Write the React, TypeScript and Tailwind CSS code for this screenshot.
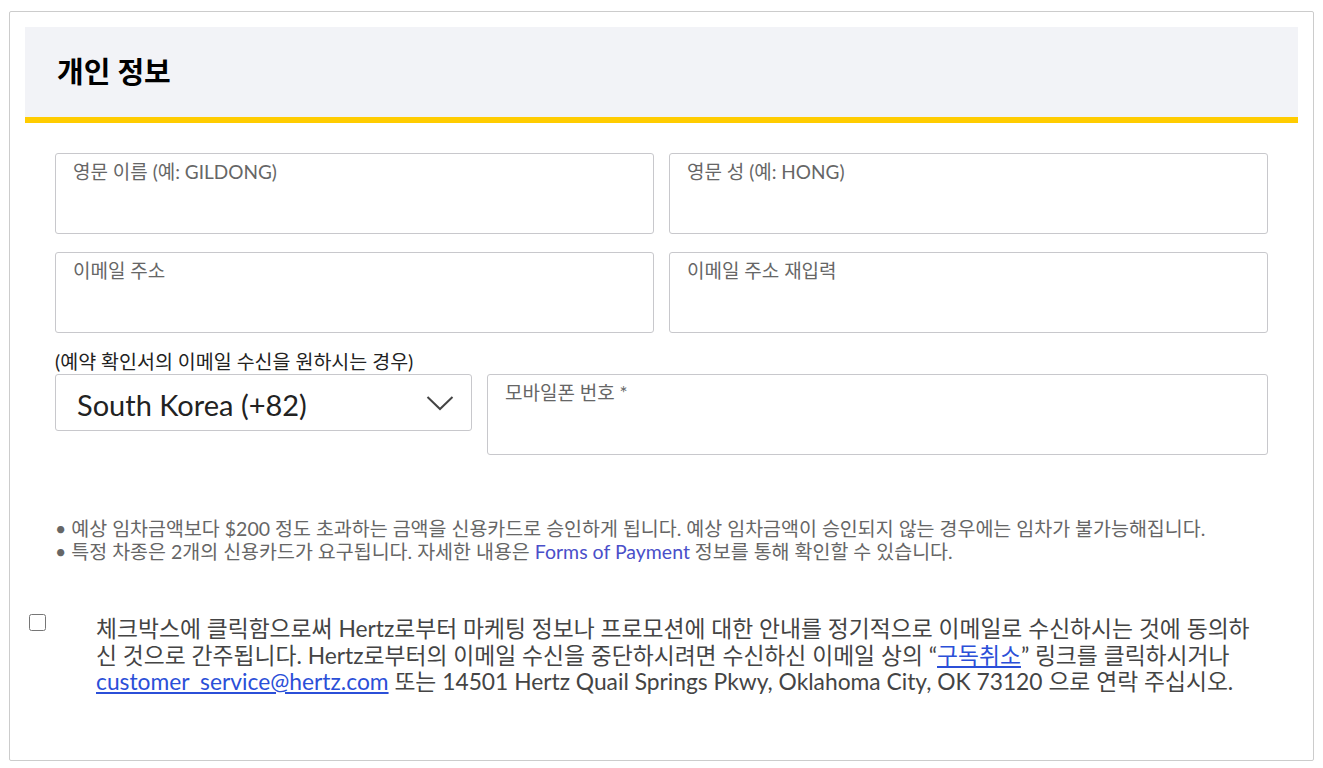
import React from 'react';

const font = { fontFamily: "Lato, 'Noto Sans CJK KR', sans-serif" };

const Field = ({ label, className = '' }: { label: string; className?: string }) => (
  <div className={`h-[81px] rounded-[3px] border border-[#c8c8cc] bg-white px-[17px] pt-[5px] text-[19px] leading-[26px] text-[#666] ${className}`}>
    {label}
  </div>
);

export default function App() {
  return (
    <div className="min-h-screen bg-white pl-[9px] pt-[11px]" style={font}>
      <div className="h-[750px] w-[1305px] rounded-[2px] border border-[#cccccc] p-[15px]">
        <div className="flex h-[96px] items-center border-b-[6px] border-[#ffcc00] bg-[#f2f3f7] px-[32px]">
          <h2 className="text-[29px] font-bold text-black">개인 정보</h2>
        </div>

        <div className="px-[30px] pt-[30px]">
          <div className="grid grid-cols-2 gap-x-[15px] gap-y-[18px]">
            <Field label="영문 이름 (예: GILDONG)" />
            <Field label="영문 성 (예: HONG)" />
            <Field label="이메일 주소" />
            <Field label="이메일 주소 재입력" />
          </div>

          <p className="mt-[17px] text-[19.5px] leading-[24px] text-[#222]">(예약 확인서의 이메일 수신을 원하시는 경우)</p>
          <div className="flex items-start gap-[15px]">
            <div className="flex h-[57px] w-[417px] items-center justify-between rounded-[3px] border border-[#c8c8cc] pl-[21px] pr-[17px]">
              <span className="pt-[5px] text-[29px] leading-[34px] text-[#222]">South Korea (+82)</span>
              <svg width="28" height="16" viewBox="0 0 28 16" fill="none" stroke="#444" strokeWidth="2">
                <path d="M1.5 2l12.5 12L26.5 2" />
              </svg>
            </div>
            <Field label="모바일폰 번호 *" className="flex-1" />
          </div>

          <ul className="mt-[62px] text-[19.5px] leading-[23px] text-[#666]">
            <li>• 예상 임차금액보다 $200 정도 초과하는 금액을 신용카드로 승인하게 됩니다. 예상 임차금액이 승인되지 않는 경우에는 임차가 불가능해집니다.</li>
            <li>
              • 특정 차종은 2개의 신용카드가 요구됩니다. 자세한 내용은 <span className="text-[#4a4fc9]">Forms of Payment</span> 정보를 통해 확인할 수 있습니다.
            </li>
          </ul>
        </div>

        <div className="mt-[50px] flex items-start pl-[4px]">
          <input type="checkbox" className="mt-[1px] h-[17px] w-[17px] shrink-0" />
          <p className="ml-[50px] flex-1 pt-[2px] text-[22.8px] leading-[26.5px] text-[#444]">
            체크박스에 클릭함으로써 Hertz로부터 마케팅 정보나 프로모션에 대한 안내를 정기적으로 이메일로 수신하시는 것에 동의하
            <br />
            신 것으로 간주됩니다. Hertz로부터의 이메일 수신을 중단하시려면 수신하신 이메일 상의 “
            <a href="#" className="text-[#2b4fd8] underline">구독취소</a>” 링크를 클릭하시거나
            <br />
            <a href="#" className="text-[#2b4fd8] underline">customer_service@hertz.com</a> 또는 14501 Hertz Quail Springs Pkwy, Oklahoma City, OK 73120 으로 연락 주십시오.
          </p>
        </div>
      </div>
    </div>
  );
}
